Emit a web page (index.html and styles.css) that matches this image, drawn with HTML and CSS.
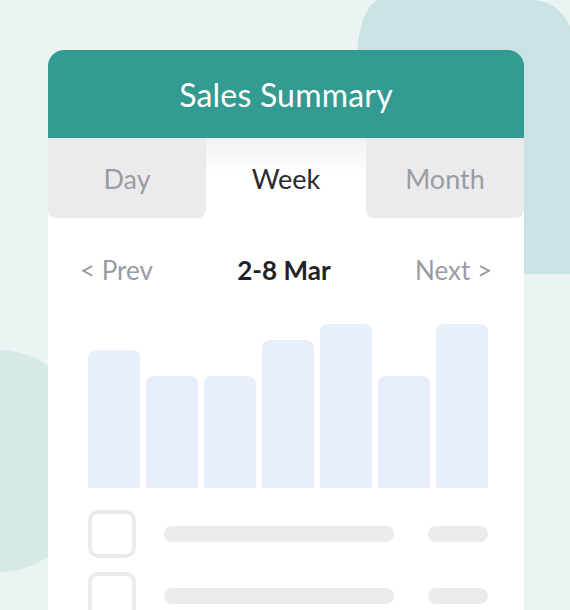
FILE: index.html
```html
<!DOCTYPE html>
<html lang="en">

<head>
    <meta charset="UTF-8">
    <meta name="viewport" content="width=device-width, initial-scale=1.0">
    <title>Sales Summary</title>
    <link rel="stylesheet" href="styles.css">
</head>

<body>
    <div class="blob blob-right"></div>
    <div class="blob blob-left"></div>

    <div class="card">
        <div class="card-header">Sales Summary</div>

        <div class="tabs">
            <div class="tab">Day</div>
            <div class="tab active">Week</div>
            <div class="tab">Month</div>
        </div>

        <div class="range">
            <span class="range-link">&lt; Prev</span>
            <span class="range-label">2-8 Mar</span>
            <span class="range-link">Next &gt;</span>
        </div>

        <div class="chart">
            <div class="bar" style="height: 138px"></div>
            <div class="bar" style="height: 112px"></div>
            <div class="bar" style="height: 112px"></div>
            <div class="bar" style="height: 148px"></div>
            <div class="bar" style="height: 164px"></div>
            <div class="bar" style="height: 112px"></div>
            <div class="bar" style="height: 164px"></div>
        </div>

        <div class="list">
            <div class="row">
                <div class="check"></div>
                <div class="line"></div>
                <div class="amount"></div>
            </div>
            <div class="row">
                <div class="check"></div>
                <div class="line"></div>
                <div class="amount"></div>
            </div>
        </div>
    </div>
</body>

</html>
```

FILE: styles.css
```css
html,
body {
    height: 100%;
}

body {
    font-family: 'Lato', 'Noto Sans', sans-serif;
    background: #ebf3f3;
    margin: 0;
    padding: 50px 0 0 48px;
    box-sizing: border-box;
    overflow: hidden;
    position: relative;
}

/* decorative shapes behind the card */
.blob {
    position: absolute;
    z-index: 0;
}

.blob-right {
    left: 356px;
    top: 0;
    width: 216px;
    height: 274px;
    background: #c8e3e2;
    border-radius: 24px 40px 0 0 / 70px 40px 0 0;
}

.blob-left {
    left: -94px;
    top: 350px;
    width: 188px;
    height: 222px;
    background: #d5e9e8;
    border-radius: 50%;
}

.card {
    position: relative;
    z-index: 1;
    width: 476px;
    min-height: 600px;
    background: #fff;
    border-radius: 16px 16px 0 0;
    overflow: hidden;
}

.card-header {
    height: 88px;
    background: #339b91;
    color: #fff;
    font-size: 32px;
    display: flex;
    align-items: center;
    justify-content: center;
    letter-spacing: 0.2px;
}

.tabs {
    display: flex;
    height: 80px;
}

.tab {
    flex: 1;
    display: flex;
    align-items: center;
    justify-content: center;
    font-size: 27px;
    color: #9a9ca3;
    background: #ebebed;
    border-radius: 0 0 8px 8px;
}

.tab.active {
    flex: 0 0 160px;
    color: #2a2a2f;
    background: linear-gradient(#f1f1f3, #fff 45%);
    border-radius: 0;
}

.range {
    display: flex;
    justify-content: space-between;
    align-items: center;
    padding: 0 32px;
    height: 104px;
    font-size: 26px;
}

.range-link {
    color: #9a9ca3;
}

.range-label {
    color: #222226;
    font-weight: 700;
}

.chart {
    display: flex;
    align-items: flex-end;
    gap: 6px;
    height: 166px;
    margin: 0 36px 0 40px;
}

.bar {
    flex: 1;
    background: #e8eefc;
    border-radius: 8px 8px 0 0;
}

.list {
    display: flex;
    flex-direction: column;
    gap: 14px;
    padding: 22px 36px 0 40px;
}

.row {
    display: flex;
    align-items: center;
}

.check {
    width: 40px;
    height: 40px;
    border: 4px solid #ebebed;
    border-radius: 10px;
}

.line {
    width: 230px;
    height: 16px;
    margin-left: 28px;
    border-radius: 8px;
    background: #ebebed;
}

.amount {
    width: 60px;
    height: 16px;
    margin-left: auto;
    border-radius: 8px;
    background: #ebebed;
}
```
